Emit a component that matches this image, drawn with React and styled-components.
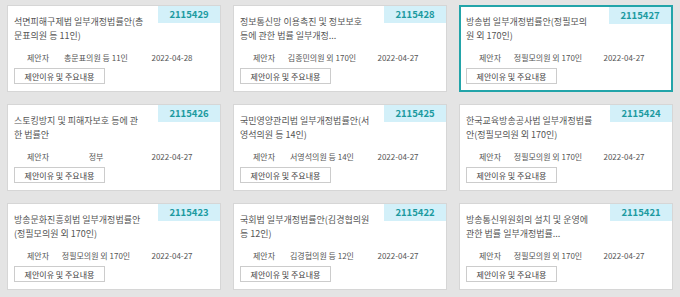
import React from 'react';
import styled, { createGlobalStyle } from 'styled-components';

const GlobalStyle = createGlobalStyle`
    body {
        margin: 0;
        background: #e4e4e4;
        font-family: "Noto Sans CJK KR", "Noto Sans", sans-serif;
    }
`;

const bills = [
    { no: '2115429', title: '석면피해구제법 일부개정법률안(총문표의원 등 11인)', who: '총문표의원 등 11인', date: '2022-04-28' },
    { no: '2115428', title: '정보통신망 이용촉진 및 정보보호 등에 관한 법률 일부개정...', who: '김종민의원 외 170인', date: '2022-04-27' },
    { no: '2115427', title: '방송법 일부개정법률안(정필모의원 외 170인)', who: '정필모의원 외 170인', date: '2022-04-27', active: true },
    { no: '2115426', title: '스토킹방지 및 피해자보호 등에 관한 법률안', who: '정부', date: '2022-04-27' },
    { no: '2115425', title: '국민영양관리법 일부개정법률안(서영석의원 등 14인)', who: '서영석의원 등 14인', date: '2022-04-27' },
    { no: '2115424', title: '한국교육방송공사법 일부개정법률안(정필모의원 외 170인)', who: '정필모의원 외 170인', date: '2022-04-27' },
    { no: '2115423', title: '방송문화진흥회법 일부개정법률안 (정필모의원 외 170인)', who: '정필모의원 외 170인', date: '2022-04-27' },
    { no: '2115422', title: '국회법 일부개정법률안(김경협의원 등 12인)', who: '김경협의원 등 12인', date: '2022-04-27' },
    { no: '2115421', title: '방송통신위원회의 설치 및 운영에 관한 법률 일부개정법률...', who: '정필모의원 외 170인', date: '2022-04-27' },
];

function App() {
    return (
        <>
            <GlobalStyle />
            <Grid>
                {bills.map(b => (
                    <Card key={b.no} $active={b.active}>
                        <BillNo>{b.no}</BillNo>
                        <Title $active={b.active}>{b.title}</Title>
                        <Meta>
                            <span>제안자</span>
                            <span>{b.who}</span>
                            <span>{b.date}</span>
                        </Meta>
                        <ReasonButton>제안이유 및 주요내용</ReasonButton>
                    </Card>
                ))}
            </Grid>
        </>
    )
}

const Grid = styled.div`
    display: grid;
    grid-template-columns: repeat(3, 214px);
    grid-auto-rows: 87px;
    column-gap: 12px;
    row-gap: 12px;
    padding: 5px 7px;
`;

const Card = styled.div`
    position: relative;
    box-sizing: border-box;
    display: flex;
    flex-direction: column;
    align-items: flex-start;
    background: #fff;
    border: ${p => p.$active ? '2px solid #23a4a9' : '1px solid #d6d6d6'};
    padding: ${p => p.$active ? '8px 5px 0' : '9px 6px 0'};
`;

const BillNo = styled.div`
    position: absolute;
    top: 0;
    right: 0;
    width: 62px;
    height: 17px;
    background: #d3f0f9;
    color: #1c9aa0;
    font-size: 9.5px;
    font-weight: 700;
    line-height: 17px;
    text-align: center;
`;

const Title = styled.div`
    width: ${p => p.$active ? '128px' : '130px'};
    height: 28px;
    font-size: 9px;
    line-height: 14px;
    color: #555;
    word-break: break-all;
    overflow: hidden;
    display: -webkit-box;
    -webkit-line-clamp: 2;
    -webkit-box-orient: vertical;
`;

const Meta = styled.div`
    display: grid;
    grid-template-columns: 48px 80px 1fr;
    width: 200px;
    margin: 8px 0 0 -6px;
    font-size: 8px;
    line-height: 14px;
    color: #555;
    text-align: center;

    span:first-child {
        padding-left: 12px;
    }
`;

const ReasonButton = styled.button`
    box-sizing: border-box;
    width: 91px;
    height: 16px;
    margin-top: 3px;
    padding: 0;
    background: #fff;
    border: 1px solid #ccc;
    font-family: inherit;
    font-size: 8px;
    color: #444;
`;

export default App
